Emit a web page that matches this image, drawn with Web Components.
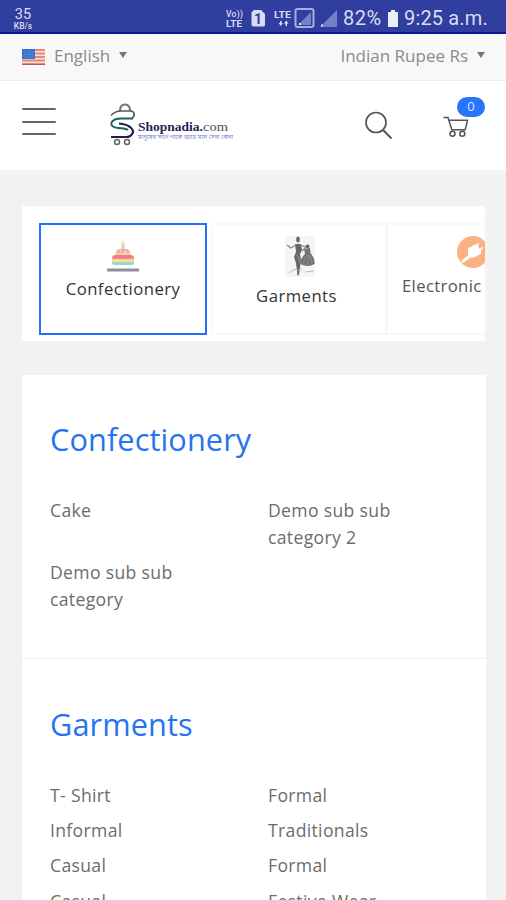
<!DOCTYPE html>
<html lang="en">
<head>
<meta charset="utf-8">
<title>Shopnadia.com</title>
<style>
html,body{margin:0;height:900px;overflow:hidden;background:#f2f2f2;font-family:"Open Sans","Noto Sans",sans-serif;color:#666}
</style>
</head>
<body>
<shop-page></shop-page>
<script>
const define = (name, html) => customElements.define(name, class extends HTMLElement {
  connectedCallback() {
    if (this.shadowRoot) return;
    const t = document.createElement('template');
    t.innerHTML = html(this);
    this.attachShadow({mode: 'open'}).append(t.content.cloneNode(true));
  }
});

define('status-bar', () => `<style>
:host{display:flex;height:34px;box-sizing:border-box;background:#303e9f;border-bottom:2px solid #0c1793;color:#d9dcf3;font-family:Roboto,sans-serif;padding:0 15px 0 12px;justify-content:space-between}
.speed{display:flex;flex-direction:column;align-items:center;width:22px;padding-top:8px;font-size:14.500px;line-height:13px}
.speed small{font-size:8.500px;line-height:10px;font-weight:500;white-space:nowrap}
.right{display:flex;align-items:center;padding-top:4px}
.txt{font-size:20px;line-height:28px;white-space:nowrap}
.pct{width:40px;letter-spacing:.5px}.time{width:87px;margin-left:5px;letter-spacing:.15px}
svg{display:block}
</style>
<div class="speed"><span>35</span><small>KB/s</small></div>
<div class="right">
<svg width="118" height="28" viewBox="224 4 118 28" font-family="Roboto,sans-serif" fill="#d9dcf3">
<text x="225" y="17" font-size="8.5" textLength="17" font-weight="500">Vo))</text>
<text x="225" y="26.500" font-size="9" textLength="16" font-weight="700" lengthAdjust="spacingAndGlyphs">LTE</text>
<path d="M253 10h7l4 4v11q0 1.500-1.500 1.500h-10q-2 0-2-2V12.500z"/>
<text x="253" y="23.500" font-size="14" font-weight="700" fill="#303e9f">1</text>
<text x="273" y="18" font-size="9.500" textLength="17" font-weight="700" lengthAdjust="spacingAndGlyphs">LTE</text>
<path d="M279 21h1.500v2h1.500l-2.200 3-2.300-3h1.500zM284.500 26v-2.500H283l2.300-3 2.200 3H286V26z"/>
<rect x="294.500" y="9" width="18" height="18" rx="2" fill="none" stroke="#a7aedf" stroke-width="2"/>
<path d="M310 12v13h-13z" fill="#7480c8"/><path d="M298 23h2v2h-2z"/>
<path d="M336 10v17h-17z" fill="#7480c8"/><path d="M320 24.500h2v2h-2z"/>
</svg>
<span class="txt pct">82%</span>
<svg width="12" height="28" viewBox="0 4 12 28" style="margin-left:4px"><path d="M4 10h4v2h3v15H1V12h3z" fill="#eceefa"/></svg>
<span class="txt time">9:25 a.m.</span>
</div>`);

define('drop-choice', () => `<style>
:host{display:flex;align-items:center;font-size:17px;color:#8b8b8b;white-space:nowrap}
i{border:4.500px solid transparent;border-top:6px solid #777;border-bottom:0;margin-left:9px;margin-top:-1px}
</style><slot name="icon"></slot><span><slot></slot></span><i></i>`);

define('us-flag', () => `<style>:host{display:block;margin:2px 9px 0 0}svg{display:block}</style>
<svg width="23" height="16" viewBox="0 0 23 16"><rect width="23" height="16" fill="#f8e3df"/><path d="M0 1h23M0 4.500h23M0 8h23M0 11.500h23M0 15h23" stroke="#ee8379" stroke-width="1.800"/><rect width="13" height="10" fill="#3a74cc"/><path d="M2 3h9M2 5.500h9M2 8h9" stroke="#6a9ce0" stroke-dasharray="1 1.500"/><path d="M0 15.500h23" stroke="#a8625c"/></svg>`);

define('top-bar', () => `<style>
:host{display:flex;justify-content:space-between;height:47px;box-sizing:border-box;padding:0 21px 3px 22px;background:#f8f8f8;border-bottom:1px solid #ececec}
</style><slot></slot>`);

define('shop-logo', () => `<style>:host{display:block}svg{display:block}</style>
<svg width="128" height="46" viewBox="108 101 128 46" fill="none">
<path d="M120 111q0-6.500 5-6.500t5 6.500" stroke="#71767d" stroke-width="2"/>
<path d="M111 115.500q4-4.500 10-4.500h9q4 0 4 3v2l-2 2.500" stroke="#4c5960" stroke-width="1.700"/>
<path d="M133 118.500h-11c-13 0-14 9-4 9.500 8 .5 9 1 10 2" stroke="#1f6059" stroke-width="1.900"/>
<path d="M119 123.500q7 .5 11 3.500 5 4 2 7-1.500 3-6 3h-15" stroke="#20204f" stroke-width="2.200"/>
<circle cx="117" cy="142" r="2.500" stroke="#62656c" stroke-width="1.500"/><circle cx="127" cy="142" r="2.500" stroke="#62656c" stroke-width="1.500"/>
<text x="138" y="131" font-family="Liberation Serif,serif" font-weight="700" font-size="13.500" fill="#262357" textLength="65" lengthAdjust="spacingAndGlyphs">Shopnadia.</text>
<text x="203" y="131" font-family="Liberation Serif,serif" font-size="13.500" fill="#48525c" textLength="25" lengthAdjust="spacingAndGlyphs">com</text>
<text x="138" y="138.500" font-family="Noto Sans Bengali,Noto Sans,sans-serif" font-size="6" fill="#8186d6" textLength="95" lengthAdjust="spacingAndGlyphs">মানুষের সাথে থাকে আছে মনে সেবা কেনা</text>
</svg>`);

define('cart-button', () => `<style>
:host{display:block;position:relative;width:42px;height:44px}
svg{display:block}
b{position:absolute;left:14px;top:0;width:28px;height:20px;border-radius:10px;background:#2874fc;color:#dbe8ff;font-size:13px;line-height:19px;text-align:center;font-weight:400}
</style><svg width="42" height="44" viewBox="443 97 42 44" fill="none" stroke="#555" stroke-width="1.500"><path d="M443.500 117.500h4.500l3.800 12.200h13.400l2.300-9.500h-18"/><circle cx="452.500" cy="133.800" r="2.500"/><circle cx="462.300" cy="133.800" r="2.500"/></svg><b><slot></slot></b>`);

define('site-header', () => `<style>
:host{display:flex;height:90px;box-sizing:border-box;background:#fff;border-bottom:1px solid #f4f4f4;padding:16px 21px 0 22px}
.menu{display:grid;gap:10.500px;align-content:start;width:34px;padding-top:11px;margin-right:52px}
.menu i{height:2px;background:#666;display:block;border-radius:1px}
shop-logo{margin-top:4px}
.search{margin:13px 49px 0 auto;display:block}
</style>
<div class="menu"><i></i><i></i><i></i></div><shop-logo></shop-logo>
<svg class="search" width="30" height="30" viewBox="0 0 30 30" fill="none" stroke="#555"><circle cx="12" cy="12.500" r="10" stroke-width="1.700"/><path d="M19 20l8.500 8.500" stroke-width="2"/></svg>
<cart-button>0</cart-button>`);

define('category-tab', () => `<style>
:host{display:flex;flex-direction:column;align-items:center;flex:none;box-sizing:border-box;width:175px;height:112px;border:2px solid #f8f8f8;border-right-width:1px;background:#fff;font-size:16.700px;line-height:25px;color:#333;letter-spacing:.45px}
:host([active]){width:168px;border:2px solid #1f6ffb;margin-right:4px}
:host([cut]){align-items:flex-start;border-right:0;color:#555}
span{white-space:nowrap}
:host(:not([active],[cut])) span{padding-right:5px}
:host([cut]) span{padding-left:14px;letter-spacing:.35px}
</style><slot name="icon"></slot><span><slot></slot></span>`);

define('cake-icon', () => `<style>:host{display:block;padding-top:15px;height:36px}svg{display:block}</style>
<svg width="32" height="32" viewBox="0 0 32 32"><path d="M14 3l2-3 2 3v6h-4z" fill="#e8e9b5"/><path d="M15 5h2v4h-2z" fill="#c5dfbc"/><path d="M9 14q0-5 4-5h6q4 0 4 5z" fill="#f4a8ba"/><path d="M8 13h16v3H8z" fill="#f6d783"/><path d="M5 18q0-3 4-3h14q4 0 4 3v1H5z" fill="#f27b95"/><path d="M5 18q3 3 6 0 3 3 6 0 3 3 6 0 2 2 4 0v5H5z" fill="#fbc77c"/><path d="M5 21h22v2q0 2-3 2H8q-3 0-3-2z" fill="#93dccc"/><path d="M5 20h22v2H5z" fill="#f7df8d"/><path d="M13 11h1M17 12h2" stroke="#fff"/><path d="M0 28.500h32v3H0z" fill="#8f9099"/></svg>`);

define('fashion-icon', () => `<style>:host{display:block;padding:11px 0 0 2px;height:47px}svg{display:block}</style>
<svg width="30" height="41" viewBox="0 0 30 41"><rect width="30" height="41" fill="#f5f5f5"/><g fill="#666"><ellipse cx="13" cy="3.500" rx="1.800" ry="3"/><path d="M10 8h6l1 6-2 4 1 6-2 15-1.500.5L11 27l-2-6 2-5z"/><circle cx="22.500" cy="10.500" r="1.900"/><path d="M19 13l6-1 .5 5q5 6 4 11-7 4-14 0 0-6 4.500-10z" fill="#747474"/></g><path d="M11 9l-5 3-4-3M15 9l6 2-4 4M12 18l3 9M18 27l4-8M22 29l2-10M27 28l-2-9" stroke="#888" stroke-width="1.300" fill="none"/><path d="M4 37q6-5 9-3l4-1M20 36l9-1" stroke="#bbb" fill="none"/></svg>`);

define('plug-icon', () => `<style>:host{display:block;padding:11px 0 0 69px;height:37px}svg{display:block}</style>
<svg width="32" height="32" viewBox="0 0 32 32"><circle cx="16" cy="16" r="16" fill="#fbb184"/><path d="M5 26l8-6" stroke="#fff" stroke-width="3" fill="none"/><path d="M11 14q0-3 3-3l3-2q2-1 4 1l3 5q1 3-2 4l-4 2q-5 2-7-2z" fill="#fff"/><path d="M19 11l2-3M22 15l3-3" stroke="#fff" stroke-width="2" stroke-linecap="round"/></svg>`);

define('category-strip', () => `<style>
:host{display:flex;box-sizing:border-box;width:463px;height:135px;margin:35px 0 0 22px;padding:17px 0 0 17px;background:#fff;overflow:hidden}
</style><slot></slot>`);

define('category-section', el => `<style>
:host{display:block;padding:43px 28px 0;box-sizing:border-box}
:host([divided]){border-top:1px solid #efefef;padding-top:44px}
h2{margin:0 0 37px;font-size:30.700px;line-height:42px;font-weight:400;color:#2673f2;letter-spacing:.1px}
ul{margin:0;padding:0;list-style:none;display:grid;grid-template-columns:190px 190px;column-gap:28px;row-gap:8.200px;font-size:17.600px;line-height:27px;color:#6c6c6c;letter-spacing:.33px}
li{max-width:150px}
</style><h2>${el.getAttribute('heading')}</h2><ul>${el.getAttribute('items').split('|').map(i => `<li>${i}</li>`).join('')}</ul>`);

define('category-list', () => `<style>
:host{display:flex;flex-direction:column;width:464px;height:600px;background:#fff;margin:34px 0 0 22px}
::slotted(:first-child){height:283px}
</style><slot></slot>`);

define('shop-page', () => `<style>:host{display:block;width:506px;height:900px;overflow:hidden}</style>
<status-bar></status-bar>
<top-bar><drop-choice><us-flag slot="icon"></us-flag>English</drop-choice><drop-choice>Indian Rupee Rs</drop-choice></top-bar>
<site-header></site-header>
<category-strip>
<category-tab active><cake-icon slot="icon"></cake-icon>Confectionery</category-tab>
<category-tab><fashion-icon slot="icon"></fashion-icon>Garments</category-tab>
<category-tab cut><plug-icon slot="icon"></plug-icon>Electronic</category-tab>
</category-strip>
<category-list>
<category-section heading="Confectionery" items="Cake|Demo sub sub category 2|Demo sub sub category"></category-section>
<category-section divided heading="Garments" items="T- Shirt|Formal|Informal|Traditionals|Casual|Formal|Casual|Festive Wear"></category-section>
</category-list>`);
</script>
</body>
</html>
